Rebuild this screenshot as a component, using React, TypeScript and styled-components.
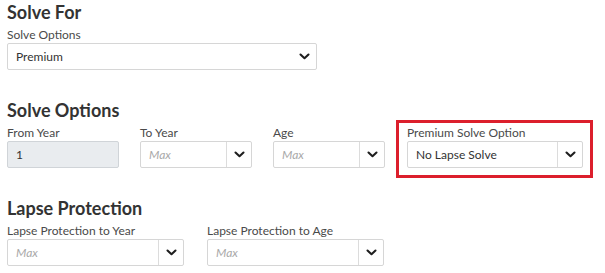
import styled, { createGlobalStyle } from "styled-components";

const GlobalStyle = createGlobalStyle`
  body {
    margin: 0;
    background: #fff;
    font-family: Lato, "Open Sans", sans-serif;
    color: #333;
  }
`;

const Page = styled.div`
  display: flex;
  flex-direction: column;
  gap: 30px;
  padding: 2px 0 0 7px;
`;

const Section = styled.section`
  display: flex;
  flex-direction: column;
`;

const Heading = styled.h2`
  margin: 0 0 5px;
  font-size: 18px;
  line-height: 21px;
  font-weight: 700;
  color: #333;
`;

const Row = styled.div<{ $gap: number }>`
  display: flex;
  align-items: flex-start;
  gap: ${(p) => p.$gap}px;
`;

const Field = styled.div<{ $width: number; $highlight?: boolean }>`
  display: flex;
  flex-direction: column;
  width: ${(p) => p.$width}px;
  ${(p) =>
    p.$highlight &&
    `
    border: 3px solid #dc1f2c;
    padding: 3px 7px 7px 8px;
    margin: -6px 0 -10px -10px;
  `}
`;

const Label = styled.label`
  font-size: 12px;
  line-height: 14px;
  margin-bottom: 1px;
  color: #4a4a4a;
  white-space: nowrap;
`;

const Box = styled.div<{ $disabled?: boolean }>`
  display: flex;
  align-items: stretch;
  box-sizing: border-box;
  height: 27px;
  border: 1px solid #d6d6d6;
  border-radius: 2px;
  background: ${(p) => (p.$disabled ? "#e9ecef" : "#fff")};
  border-color: ${(p) => (p.$disabled ? "#d0d4d8" : "#d6d6d6")};
`;

const Value = styled.span<{ $placeholder?: boolean }>`
  flex: 1;
  display: flex;
  align-items: center;
  padding-left: 8px;
  font-size: 12px;
  color: ${(p) => (p.$placeholder ? "#a9a9a9" : "#333")};
  font-style: ${(p) => (p.$placeholder ? "italic" : "normal")};
`;

const Addon = styled.span<{ $divided?: boolean }>`
  display: flex;
  align-items: center;
  justify-content: center;
  width: 24px;
  border-left: ${(p) => (p.$divided ? "1px solid #dcdcdc" : "none")};
`;

const Chevron = () => (
  <svg width="11" height="7" viewBox="0 0 11 7">
    <path d="M1.5 1.5 L5.5 5.2 L9.5 1.5" fill="none" stroke="#1e1e1e" strokeWidth="2.1" strokeLinecap="round" strokeLinejoin="round" />
  </svg>
);

type SelectProps = { value: string; placeholder?: boolean; divided?: boolean };

const Select = ({ value, placeholder, divided }: SelectProps) => (
  <Box>
    <Value $placeholder={placeholder}>{value}</Value>
    <Addon $divided={divided}>
      <Chevron />
    </Addon>
  </Box>
);

export default function App() {
  return (
    <>
      <GlobalStyle />
      <Page>
        <Section>
          <Heading>Solve For</Heading>
          <Field $width={310}>
            <Label>Solve Options</Label>
            <Select value="Premium" />
          </Field>
        </Section>

        <Section>
          <Heading>Solve Options</Heading>
          <Row $gap={21}>
            <Field $width={112}>
              <Label>From Year</Label>
              <Box $disabled>
                <Value>1</Value>
              </Box>
            </Field>
            <Field $width={112}>
              <Label>To Year</Label>
              <Select value="Max" placeholder divided />
            </Field>
            <Field $width={112}>
              <Label>Age</Label>
              <Select value="Max" placeholder divided />
            </Field>
            <Field $width={176} $highlight>
              <Label>Premium Solve Option</Label>
              <Select value="No Lapse Solve" divided />
            </Field>
          </Row>
        </Section>

        <Section>
          <Heading>Lapse Protection</Heading>
          <Row $gap={23}>
            <Field $width={177}>
              <Label>Lapse Protection to Year</Label>
              <Select value="Max" placeholder divided />
            </Field>
            <Field $width={177}>
              <Label>Lapse Protection to Age</Label>
              <Select value="Max" placeholder divided />
            </Field>
          </Row>
        </Section>
      </Page>
    </>
  );
}
